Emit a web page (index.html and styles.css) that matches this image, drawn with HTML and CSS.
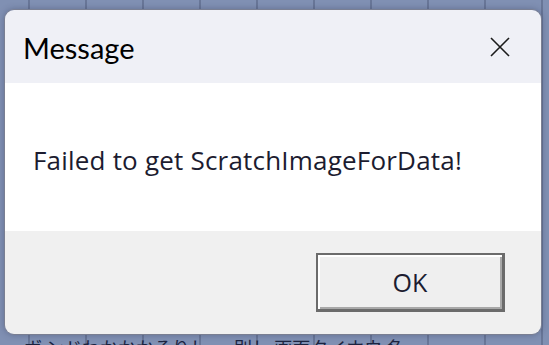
FILE: index.html
```html
<!DOCTYPE html>
<html>
<head>
<meta charset="utf-8">
<link rel="stylesheet" href="styles.css">
</head>
<body>
<div class="desk">
  <div class="dialog">
    <div class="titlebar">
      <span class="title">Message</span>
      <svg class="close" width="20" height="20" viewBox="0 0 20 20"><path d="M1 1 L19 19 M19 1 L1 19" stroke="#1b1b1b" stroke-width="1.6" fill="none"/></svg>
    </div>
    <div class="content">
      <p class="msg">Failed to get ScratchImageForData!</p>
    </div>
    <div class="footer">
      <button class="ok">OK</button>
    </div>
  </div>
  <div class="under">ボ ンドわかかかるりし 一 則し 画面タイホウ 名</div>
</div>
</body>
</html>
```
FILE: styles.css
```css
html, body {
  margin: 0;
  padding: 0;
  width: 549px;
  height: 345px;
  overflow: hidden;
}
.desk {
  height: 345px;
  box-sizing: border-box;
  padding: 9px 7px 0 4px;
  background-color: #8090b3;
  background-image: repeating-linear-gradient(90deg, transparent 0 28px, rgba(60,70,100,0.35) 28px 30px, transparent 30px 57px);
  display: flex;
  flex-direction: column;
  overflow: hidden;
}
.dialog {
  flex-shrink: 0;
  height: 326px;
  border: 1px solid #7a7f92;
  border-radius: 10px;
  overflow: hidden;
  display: flex;
  flex-direction: column;
  box-sizing: border-box;
  box-shadow: 0 0 6px rgba(40,50,80,0.35);
}
.titlebar {
  height: 73px;
  background: #eff0f6;
  display: flex;
  align-items: center;
  justify-content: space-between;
  padding: 0 31px 0 18px;
  box-sizing: border-box;
}
.title {
  font-family: Lato, "Open Sans", sans-serif;
  font-size: 29px;
  color: #000;
  margin-top: 2px;
}
.close {
  display: block;
  margin-top: 1px;
}
.content {
  height: 148px;
  background: #fff;
  display: flex;
  align-items: center;
  padding-left: 28px;
  box-sizing: border-box;
}
.msg {
  margin: 0;
  margin-top: 6px;
  font-family: "Open Sans", sans-serif;
  font-size: 26px;
  letter-spacing: 0.2px;
  color: #1c1c30;
}
.footer {
  flex: 1;
  background: #f0f0f0;
  display: flex;
  justify-content: flex-end;
  align-items: flex-start;
  padding: 22px 36px 0 0;
  box-sizing: border-box;
}
.ok {
  width: 189px;
  height: 59px;
  box-sizing: border-box;
  background: #efefef;
  border: 2px solid #6b6b6b;
  border-right-width: 3px;
  border-bottom-width: 3px;
  box-shadow: inset 2px 2px 0 #ffffff, inset -2px -2px 0 #a8a8a8;
  font-family: "Open Sans", sans-serif;
  font-size: 25px;
  color: #1c1c30;
  padding: 0;
}
.under {
  flex-shrink: 0;
  margin-top: 2px;
  padding-left: 20px;
  font-family: "Noto Sans CJK JP", sans-serif;
  font-size: 18px;
  color: #1b2340;
  white-space: nowrap;
  line-height: 20px;
}
```
